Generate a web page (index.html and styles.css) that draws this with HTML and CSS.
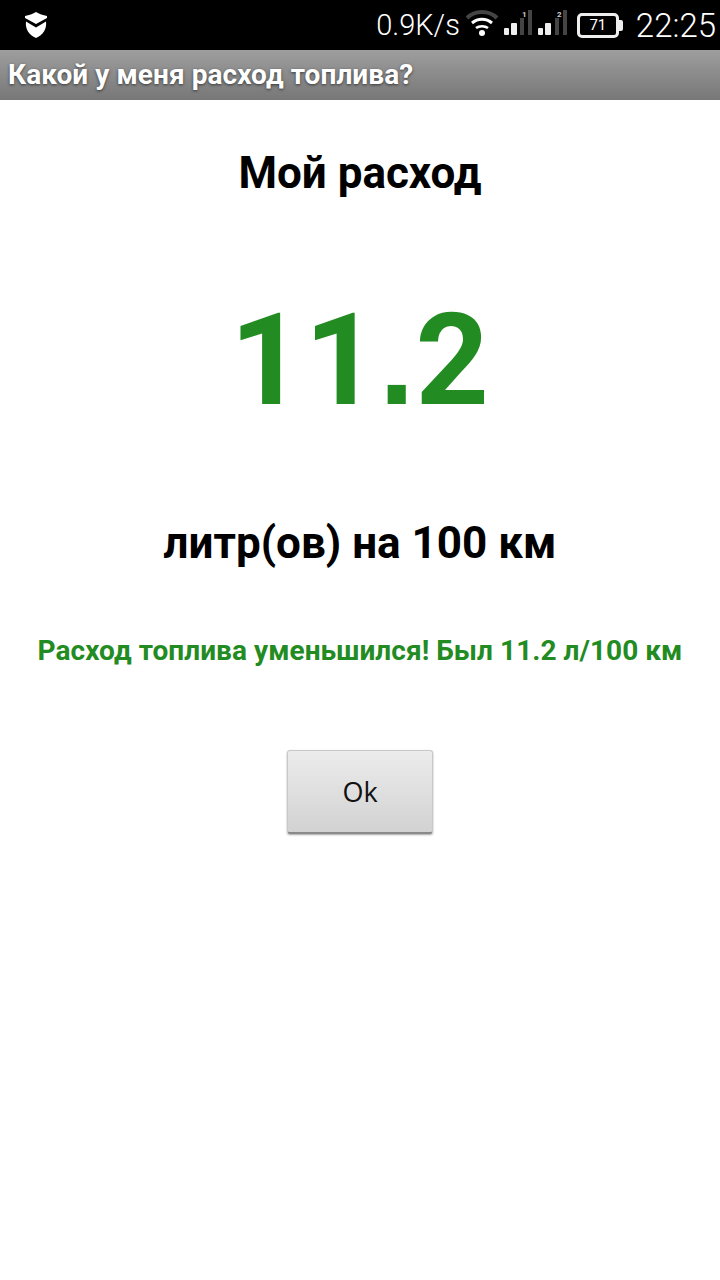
FILE: index.html
```html
<!DOCTYPE html>
<html lang="ru">
<head>
    <meta charset="UTF-8">
    <meta name="viewport" content="width=device-width, initial-scale=1.0">
    <title>Какой у меня расход топлива?</title>
    <link rel="stylesheet" href="styles.css">
</head>
<body>
    <div class="status-bar">
        <svg class="shield" width="22" height="26" viewBox="0 0 22 26">
            <path d="M0 4 C4 3 8 2 11 0 C14 2 18 3 22 4 L22 6 L11 12 L0 6 Z" fill="#fff"/>
            <path d="M1 9.500 L11 15.500 L21 9.500 C22 17 18 23 11 26 C4 23 0 17 1 9.500 Z" fill="#fff"/>
        </svg>
        <div class="status-right">
            <span class="speed">0.9K/s</span>
            <svg class="wifi" width="36" height="30" viewBox="0 0 36 30">
                <path d="M3 8 C11 0 25 0 33 8" fill="none" stroke="#444" stroke-width="4"/>
                <path d="M8 13 C14 8 22 8 28 13" fill="none" stroke="#fff" stroke-width="3"/>
                <path d="M12 18 C15 15.500 21 15.500 24 18" fill="none" stroke="#fff" stroke-width="2.500"/>
                <circle cx="18" cy="23" r="3" fill="#fff"/>
            </svg>
            <svg class="signal" width="30" height="30" viewBox="0 0 30 30">
                <rect x="0" y="18" width="5" height="7" rx="1" fill="#eee"/>
                <rect x="7" y="13" width="6" height="12" rx="1" fill="#eee"/>
                <rect x="16" y="8" width="4" height="17" fill="#444"/>
                <rect x="24" y="0" width="4" height="25" fill="#444"/>
                <text x="18" y="7" class="sim">1</text>
            </svg>
            <svg class="signal" width="30" height="30" viewBox="0 0 30 30">
                <rect x="0" y="18" width="5" height="7" rx="1" fill="#eee"/>
                <rect x="7" y="13" width="6" height="12" rx="1" fill="#eee"/>
                <rect x="17" y="8" width="4" height="17" fill="#444"/>
                <rect x="25" y="0" width="4" height="25" fill="#444"/>
                <text x="19" y="7" class="sim">2</text>
            </svg>
            <div class="battery"><span class="battery-level">71</span></div>
            <span class="clock">22:25</span>
        </div>
    </div>
    <div class="title-bar">Какой у меня расход топлива?</div>
    <main class="content">
        <h1 class="heading">Мой расход</h1>
        <div class="value">11<span class="value-dot">.</span>2</div>
        <div class="units">литр(ов) на 100 км</div>
        <p class="note">Расход топлива уменьшился! Был 11.2 л/100 км</p>
        <button class="ok-btn" type="button">Ok</button>
    </main>
</body>
</html>
```

FILE: styles.css
```css
body {
    margin: 0;
    width: 720px;
    height: 1280px;
    overflow: hidden;
    background-color: #ffffff;
    font-family: Roboto, "Liberation Sans", sans-serif;
}
.status-bar {
    height: 50px;
    background-color: #000;
    color: #fff;
    display: flex;
    align-items: center;
    justify-content: space-between;
    padding: 0 4px 0 25px;
    box-sizing: border-box;
}
.shield {
    display: block;
}
.status-right {
    display: flex;
    align-items: center;
}
.speed {
    font-size: 29px;
    font-weight: 300;
    margin-right: 4px;
}
.wifi {
    margin-right: 4px;
}
.signal {
    margin-right: 4px;
}
.signal + .signal {
    margin-right: 9px;
}
.sim {
    font-size: 8px;
    font-weight: 700;
    fill: #ccc;
}
.battery {
    width: 36px;
    height: 19px;
    border: 3px solid #eee;
    border-radius: 5px;
    display: flex;
    align-items: center;
    justify-content: center;
    position: relative;
    margin: 0 17px 0 0;
}
.battery::after {
    content: "";
    position: absolute;
    right: -7px;
    top: 4px;
    width: 4px;
    height: 11px;
    background-color: #eee;
    border-radius: 0 2px 2px 0;
}
.battery-level {
    font-size: 15px;
    color: #fff;
}
.clock {
    font-size: 33px;
    font-weight: 300;
}
.title-bar {
    height: 50px;
    line-height: 50px;
    padding-left: 8px;
    background: linear-gradient(#9e9e9e, #777777);
    color: #fff;
    font-size: 28px;
    font-weight: 700;
    letter-spacing: 0.07px;
    text-shadow: 0 1px 3px rgba(0, 0, 0, 0.6);
}
.content {
    display: flex;
    flex-direction: column;
    align-items: center;
}
.heading {
    margin: 46px 0 0;
    font-size: 44px;
    line-height: 54px;
    font-weight: 700;
    color: #000;
}
.value {
    margin-top: 75px;
    font-size: 128px;
    line-height: 170px;
    font-weight: 700;
    letter-spacing: 1px;
    color: #228b22;
}
.value-dot {
    font-family: "Liberation Sans", sans-serif;
}
.units {
    margin-top: 71px;
    font-size: 44px;
    line-height: 54px;
    font-weight: 700;
    color: #000;
}
.note {
    margin: 64px 0 0;
    font-size: 28px;
    line-height: 34px;
    font-weight: 700;
    letter-spacing: 0.05px;
    color: #228b22;
}
.ok-btn {
    margin-top: 82px;
    width: 146px;
    height: 84px;
    border: 1px solid #c8c8c8;
    border-bottom: 2px solid #8a8a8a;
    border-radius: 3px;
    background: linear-gradient(#ececec, #d2d2d2);
    box-shadow: 0 1px 2px rgba(0, 0, 0, 0.35);
    font-family: "Open Sans", Roboto, sans-serif;
    font-size: 27px;
    color: #111;
}
```
